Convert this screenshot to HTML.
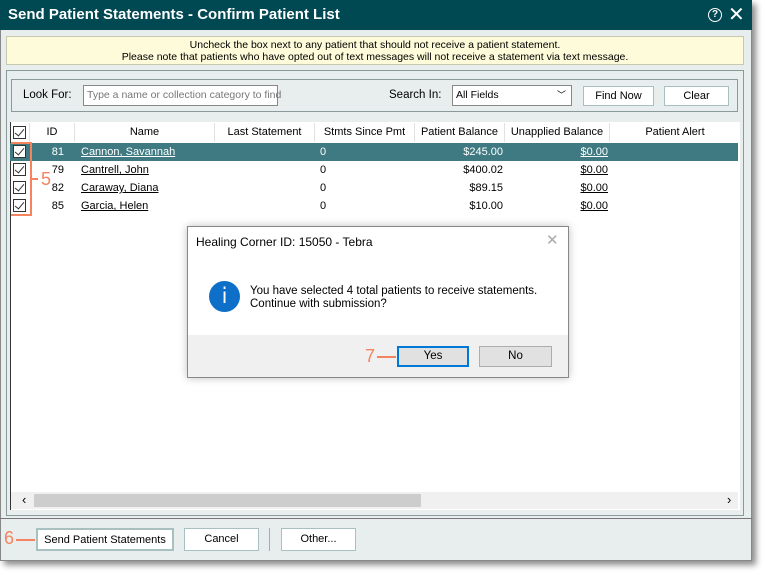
<!DOCTYPE html>
<html><head><style>
*{box-sizing:border-box;margin:0;padding:0}
body{width:765px;height:575px;background:#fff;position:relative;overflow:hidden;font-family:"Liberation Sans",sans-serif;font-size:11.5px;color:#000}
.a{position:absolute;white-space:nowrap}
.win{left:0;top:0;width:752px;height:561px;background:#e8eeee;border:1px solid #888;box-shadow:4px 4px 6px rgba(0,0,0,.45)}
.title{left:0;top:0;width:752px;height:30px;background:#004852;color:#fff;font-weight:bold;font-size:15px;line-height:30px;padding-left:8px}
.btn{background:#fff;border:1px solid #a9c0c0;text-align:center;font-size:11px}
.th{top:123px;height:19px;line-height:19px;font-size:11px;text-align:center;border-right:1px solid #e2e2e2}
.cb{width:13px;height:13px;border:1px solid #333;background:#fff}
.cb:after{content:"";position:absolute;left:3px;top:0px;width:4px;height:8px;border:solid #333;border-width:0 1.5px 1.5px 0;transform:rotate(40deg)}
.row{left:10px;width:728px;height:18px;line-height:18px;font-size:11px}
.row span{position:absolute}
.u{text-decoration:underline}
.or{color:#f4845f}
</style></head><body>
<div class="a win"></div>
<div class="a title">Send Patient Statements - Confirm Patient List</div>
<div class="a" style="left:708px;top:8px;width:14px;height:14px;border:1.5px solid #fff;border-radius:50%;color:#fff;font-size:10px;line-height:11px;text-align:center;font-weight:bold">?</div>
<div class="a" style="left:728px;top:3px;color:#fff;font-size:20px;line-height:24px">✕</div>
<div class="a" style="left:6px;top:36px;width:738px;height:29px;background:#fdfbd9;border:1px solid #c8c8b0;text-align:center;font-size:10.5px;line-height:12px;padding-top:2px">Uncheck the box next to any patient that should not receive a patient statement.<br>Please note that patients who have opted out of text messages will not receive a statement via text message.</div>
<div class="a" style="left:6px;top:70px;width:738px;height:446px;border:1px solid #8a9a9a"></div>
<div class="a" style="left:11px;top:79px;width:727px;height:33px;border:1px solid #8a9a9a"></div>
<div class="a" style="left:23px;top:89px">Look For:</div>
<div class="a" style="left:83px;top:85px;width:195px;height:21px;background:#fff;border:1px solid #888;color:#777;padding:3px 3px;font-size:10.5px">Type a name or collection category to find</div>
<div class="a" style="left:389px;top:89px">Search In:</div>
<div class="a" style="left:452px;top:85px;width:120px;height:21px;background:#fff;border:1px solid #888;padding:3px 3px;font-size:10.5px">All Fields<span style="position:absolute;right:5px;top:2px;font-size:9px">﹀</span></div>
<div class="a btn" style="left:583px;top:86px;width:71px;height:20px;line-height:18px">Find Now</div>
<div class="a btn" style="left:664px;top:86px;width:65px;height:20px;line-height:18px">Clear</div>
<div class="a" style="left:10px;top:122px;width:730px;height:388px;background:#fff;border-left:1px solid #333"></div>
<div class="a th" style="left:10px;width:20px"><div class="a cb" style="left:3px;top:3px"></div></div>
<div class="a th" style="left:30px;width:45px">ID</div>
<div class="a th" style="left:75px;width:140px">Name</div>
<div class="a th" style="left:215px;width:100px">Last Statement</div>
<div class="a th" style="left:315px;width:100px">Stmts Since Pmt</div>
<div class="a th" style="left:415px;width:90px">Patient Balance</div>
<div class="a th" style="left:505px;width:105px">Unapplied Balance</div>
<div class="a th" style="left:610px;width:130px;border:0">Patient Alert</div>
<div class="a row" style="top:143px;background:#3f7a82;color:#fff"><div class="a cb" style="left:3px;top:2px"></div><span style="right:674px">81</span><span class="u" style="left:71px">Cannon, Savannah</span><span style="left:310px">0</span><span style="right:235px">$245.00</span><span class="u" style="right:130px">$0.00</span></div>
<div class="a row" style="top:161px"><div class="a cb" style="left:3px;top:2px"></div><span style="right:674px">79</span><span class="u" style="left:71px">Cantrell, John</span><span style="left:310px">0</span><span style="right:235px">$400.02</span><span class="u" style="right:130px">$0.00</span></div>
<div class="a row" style="top:179px"><div class="a cb" style="left:3px;top:2px"></div><span style="right:674px">82</span><span class="u" style="left:71px">Caraway, Diana</span><span style="left:310px">0</span><span style="right:235px">$89.15</span><span class="u" style="right:130px">$0.00</span></div>
<div class="a row" style="top:197px"><div class="a cb" style="left:3px;top:2px"></div><span style="right:674px">85</span><span class="u" style="left:71px">Garcia, Helen</span><span style="left:310px">0</span><span style="right:235px">$10.00</span><span class="u" style="right:130px">$0.00</span></div>
<div class="a" style="left:11px;top:142px;width:21px;height:74px;border:2px solid #f4845f;border-left:0"></div>
<div class="a" style="left:32px;top:178px;width:6px;height:2px;background:#f4845f"></div>
<div class="a or" style="left:41px;top:169px;font-size:18px">5</div>
<div class="a" style="left:11px;top:492px;width:727px;height:17px;background:#f0f0f0"></div>
<div class="a" style="left:34px;top:494px;width:387px;height:13px;background:#cdcdcd"></div>
<div class="a" style="left:22px;top:492px;font-size:13px">‹</div>
<div class="a" style="left:727px;top:492px;font-size:13px">›</div>
<div class="a" style="left:0;top:518px;width:752px;height:1px;background:#777"></div>
<div class="a btn" style="left:36px;top:528px;width:138px;height:23px;line-height:21px;border:2px solid #a9c0c0">Send Patient Statements</div>
<div class="a btn" style="left:184px;top:528px;width:75px;height:23px;line-height:21px">Cancel</div>
<div class="a" style="left:269px;top:528px;width:1px;height:23px;background:#aaa"></div>
<div class="a btn" style="left:281px;top:528px;width:75px;height:23px;line-height:21px">Other...</div>
<div class="a or" style="left:4px;top:528px;font-size:18px">6</div>
<div class="a" style="left:16px;top:539px;width:19px;height:2px;background:#f4845f"></div>
<div class="a" style="left:187px;top:226px;width:382px;height:152px;background:#fff;border:1px solid #888;box-shadow:0 0 8px rgba(0,0,0,.25)"></div>
<div class="a" style="left:196px;top:235px;font-size:12px">Healing Corner ID: 15050 - Tebra</div>
<div class="a" style="left:546px;top:231px;color:#aaa;font-size:15px">✕</div>
<div class="a" style="left:209px;top:281px;width:31px;height:31px;border-radius:50%;background:#0d6fc8;color:#fff;text-align:center;font-size:21px;line-height:31px;font-family:'DejaVu Sans',sans-serif">i</div>
<div class="a" style="left:250px;top:285px;font-size:11.5px;line-height:13px">You have selected 4 total patients to receive statements.<br>Continue with submission?</div>
<div class="a" style="left:188px;top:335px;width:380px;height:42px;background:#f0f0f0"></div>
<div class="a" style="left:397px;top:346px;width:72px;height:21px;background:#e1e1e1;border:2px solid #0078d7;text-align:center;line-height:17px">Yes</div>
<div class="a" style="left:479px;top:346px;width:73px;height:21px;background:#e1e1e1;border:1px solid #adadad;text-align:center;line-height:19px">No</div>
<div class="a or" style="left:365px;top:346px;font-size:18px">7</div>
<div class="a" style="left:377px;top:356px;width:19px;height:2px;background:#f4845f"></div>
</body></html>
